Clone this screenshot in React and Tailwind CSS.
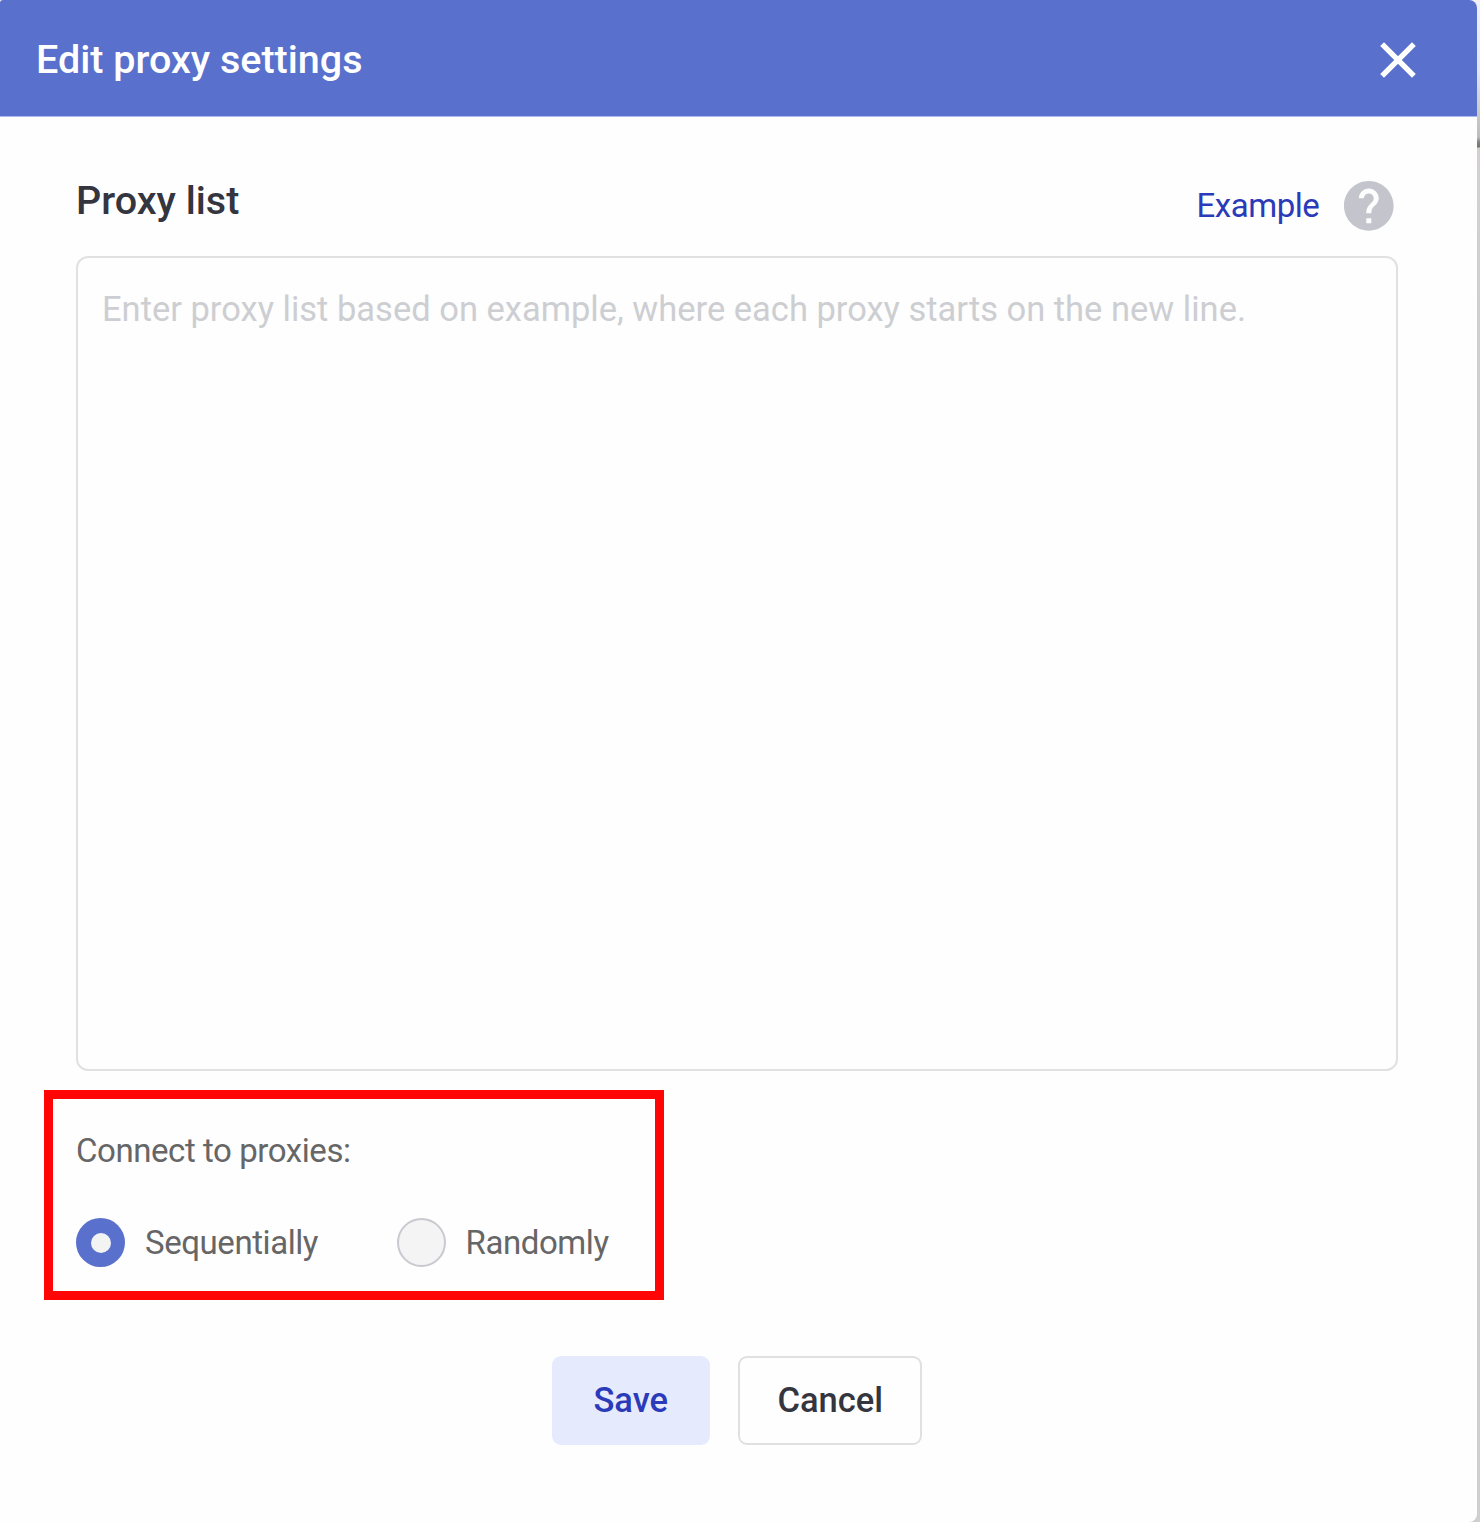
import { useState } from "react";
import { MdHelp } from "react-icons/md";

function Radio({ label, checked, onSelect }) {
  return (
    <label className="flex items-center gap-5 cursor-pointer">
      <input
        type="radio"
        name="mode"
        className="sr-only"
        checked={checked}
        onChange={onSelect}
      />
      <span
        className={
          checked
            ? "flex size-[49px] shrink-0 items-center justify-center rounded-full bg-[#5970cc]"
            : "flex size-[49px] shrink-0 rounded-full border-2 border-[#c9cad0] bg-[#f4f4f5]"
        }
      >
        {checked && <span className="size-5 rounded-full bg-[#f3f3f4]" />}
      </span>
      <span className="text-[33px] leading-[40px] tracking-[-0.43px] whitespace-nowrap">{label}</span>
    </label>
  );
}

export default function App() {
  const [mode, setMode] = useState("Sequentially");
  return (
    <div className="h-[1522px] w-[1480px] overflow-hidden bg-[linear-gradient(to_bottom,#f1f1f5_0px,#e3e5f0_70px,#c6c6c6_120px,#bdbdbb_137px,#85837d_142px,#77756f_147px,#d4cfcc_148px,#d2d0cf_230px,#cfcfcf_300px)] font-[Roboto,sans-serif]">
      <div className="flex h-full w-[1477px] flex-col overflow-hidden rounded-tl-[3px] rounded-tr-[8px] rounded-br-[8px] bg-[#fefefe]">
        <header className="flex h-[117px] shrink-0 items-center justify-between border-b border-[#aebaf0] bg-[#5970cc] pr-[60px] pl-[36px]">
          <h1 className="pt-[3px] text-[39.5px] leading-none font-medium text-white">Edit proxy settings</h1>
          <button className="pt-1" aria-label="Close">
            <svg width="38" height="38" viewBox="0 0 38 38" fill="none" stroke="#fff" strokeWidth="5.4">
              <path d="M3.1 3.1L34.9 34.9M34.9 3.1L3.1 34.9" />
            </svg>
          </button>
        </header>

        <main className="flex flex-col pr-[79px] pl-[76px]">
          <div className="flex h-[139px] items-center justify-between pt-[39px]">
            <h2 className="pb-[11px] text-[39.5px] leading-none font-medium text-[#34353f]">Proxy list</h2>
            <div className="-mr-[0.4px] flex items-center gap-[19.5px]">
              <a className="pb-px text-[33px] leading-none tracking-[-0.47px] text-[#2b3ab9]">Example</a>
              <MdHelp size={59.6} color="#c3c4cc" />
            </div>
          </div>
          <textarea
            className="block h-[815px] w-[1322px] resize-none rounded-[12px] border-2 border-[#e1e1e2] bg-[#fefefe] px-6 py-[30px] text-[34.5px] leading-[42px] text-[#34353f] outline-none placeholder:text-[#cdced2]"
            placeholder="Enter proxy list based on example, where each proxy starts on the new line."
          />
          <section className="mt-[19px] -ml-8 h-[210px] w-[620px] border-[9px] border-[#ff0505] px-[23px] pt-8 text-[#666667]">
            <p className="text-[33px] leading-[40px] tracking-[-0.43px]">Connect to proxies:</p>
            <div className="mt-[47px] flex h-[49px] items-center gap-[78.5px]">
              {["Sequentially", "Randomly"].map((l) => (
                <Radio key={l} label={l} checked={mode === l} onSelect={() => setMode(l)} />
              ))}
            </div>
          </section>
          <div className="mt-14 flex justify-center gap-[28.5px]">
            <button className="h-[89px] w-[158px] rounded-[9px] bg-[#e6eafd] pt-px text-[34.5px] font-medium text-[#2b3ab9]">
              Save
            </button>
            <button className="h-[89px] w-[184px] rounded-[9px] border-2 border-[#e0e0e1] pt-px text-[34.5px] font-medium text-[#34353f]">
              Cancel
            </button>
          </div>
        </main>
      </div>
    </div>
  );
}
